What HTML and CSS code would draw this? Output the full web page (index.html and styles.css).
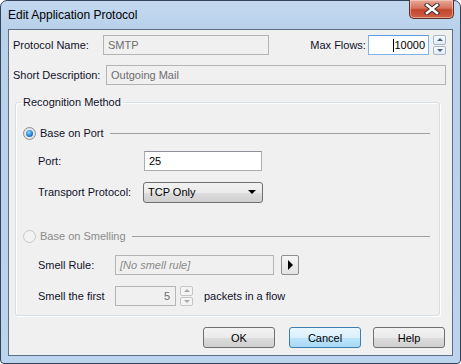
FILE: index.html
```html
<!DOCTYPE html>
<html lang="en">
<head>
    <meta charset="UTF-8">
    <title>Edit Application Protocol</title>
    <link rel="stylesheet" href="styles.css">
</head>
<body>

    <div class="window">
        <div class="titlebar">
            <span class="title">Edit Application Protocol</span>
            <div class="close">
                <svg width="16" height="12" viewBox="0 0 16 12">
                    <path d="M3 2 L13 10 M13 2 L3 10" stroke="#3b2a2a" stroke-width="4.4" stroke-linecap="square"/>
                    <path d="M3 2 L13 10 M13 2 L3 10" stroke="#ffffff" stroke-width="2.6" stroke-linecap="square"/>
                </svg>
            </div>
        </div>

        <div class="client">
            <div class="row top-row">
                <label class="lbl lbl-name">Protocol Name:</label>
                <div class="input disabled w-name">SMTP</div>
                <label class="lbl lbl-flows">Max Flows:</label>
                <div class="input focused w-flows"><span class="caret"></span>10000</div>
                <div class="spin">
                    <div class="spin-btn"><span class="arr up"></span></div>
                    <div class="spin-btn"><span class="arr down"></span></div>
                </div>
            </div>

            <div class="row desc-row">
                <label class="lbl lbl-desc">Short Description:</label>
                <div class="input disabled grow">Outgoing Mail</div>
            </div>

            <fieldset class="group">
                <legend>Recognition Method</legend>

                <div class="radio-row">
                    <span class="radio checked"></span>
                    <span class="radio-text">Base on Port</span>
                    <span class="rule"></span>
                </div>

                <div class="row sub-row first">
                    <label class="lbl lbl-sub">Port:</label>
                    <div class="input w-port">25</div>
                </div>

                <div class="row sub-row">
                    <label class="lbl lbl-sub">Transport Protocol:</label>
                    <div class="select">
                        <span>TCP Only</span>
                        <span class="sel-arrow"></span>
                    </div>
                </div>

                <div class="radio-row second">
                    <span class="radio off"></span>
                    <span class="radio-text off-text">Base on Smelling</span>
                    <span class="rule"></span>
                </div>

                <div class="row sub-row smell-first">
                    <label class="lbl lbl-smell">Smell Rule:</label>
                    <div class="input disabled w-rule"><em>[No smell rule]</em></div>
                    <div class="play"><span class="play-arr"></span></div>
                </div>

                <div class="row sub-row">
                    <label class="lbl lbl-smell">Smell the first</label>
                    <div class="input disabled w-first num">5</div>
                    <div class="spin off-spin">
                        <div class="spin-btn"><span class="arr up"></span></div>
                        <div class="spin-btn"><span class="arr down"></span></div>
                    </div>
                    <span class="after">packets in a flow</span>
                </div>
            </fieldset>

            <div class="buttons">
                <button class="btn">OK</button>
                <button class="btn default">Cancel</button>
                <button class="btn">Help</button>
            </div>
        </div>
    </div>

</body>
</html>
```

FILE: styles.css
```css
body {
    margin: 0px;
    font-family: "Liberation Sans", Arial, sans-serif;
    font-size: 11px;
    background: #ffffff;
}

.window {
    width: 461px;
    height: 364px;
    box-sizing: border-box;
    border: 1px solid #33435a;
    border-radius: 7px 7px 4px 4px;
    background: linear-gradient(to bottom, #c3d9f0 0px, #b8d0ea 30px, #bcd4ed 100%);
    padding: 0 7px 7px 7px;
    display: flex;
    flex-direction: column;
}

.titlebar {
    height: 28px;
    display: flex;
    justify-content: space-between;
    align-items: flex-start;
}

.title {
    font-size: 12px;
    color: #000000;
    margin-top: 7px;
}

.close {
    width: 45px;
    height: 19px;
    margin-top: -1px;
    margin-right: -1px;
    box-sizing: border-box;
    border: 1px solid #5c2e24;
    border-top: none;
    border-radius: 0 0 5px 5px;
    background: linear-gradient(to bottom, #e7a999 0%, #d6735d 45%, #c2452b 55%, #d0624a 100%);
    box-shadow: inset 0 0 0 1px rgba(255, 220, 210, 0.5);
    display: flex;
    align-items: center;
    justify-content: center;
}

.client {
    flex: 1;
    border: 1px solid #5d6f84;
    background: #f0f0f0;
    padding: 5px 6px 0 4px;
    display: flex;
    flex-direction: column;
}

.row {
    display: flex;
    align-items: center;
    height: 20px;
}

.desc-row {
    margin-top: 10px;
}

.lbl {
    color: #10102a;
    flex-shrink: 0;
}

.lbl-name { width: 90px; }
.lbl-desc { width: 93px; }
.lbl-flows { margin-left: 41px; width: 58px; }

.input {
    height: 20px;
    box-sizing: border-box;
    border: 1px solid #abadb3;
    border-top-color: #8e9199;
    background: #ffffff;
    padding: 0 4px;
    display: flex;
    align-items: center;
    color: #000000;
}

.input.disabled {
    background: #f0f0f0;
    border-color: #b4b4b4;
    color: #6d6d6d;
}

.input.focused {
    border-color: #7eb4ea;
    border-top-color: #569de5;
    justify-content: flex-end;
    padding-right: 3px;
}

.caret {
    width: 1px;
    height: 13px;
    background: #000000;
}

.w-name { width: 167px; }
.w-flows { width: 61px; }
.grow { flex: 1; }
.w-port { width: 118px; margin-left: 1px; }
.w-rule { width: 159px; }
.w-first { width: 61px; }
.num { justify-content: flex-end; padding-right: 5px; }

.spin {
    margin-left: 4px;
    width: 13px;
    height: 20px;
    display: flex;
    flex-direction: column;
    gap: 1px;
}

.spin-btn {
    flex: 1;
    box-sizing: border-box;
    border: 1px solid #a7b6c7;
    border-radius: 2px;
    background: linear-gradient(to bottom, #f8fbfe, #e2ebf4);
    display: flex;
    align-items: center;
    justify-content: center;
}

.off-spin .spin-btn {
    border-color: #c5c5c5;
    background: #f4f4f4;
}

.arr {
    width: 0;
    height: 0;
    border-left: 3px solid transparent;
    border-right: 3px solid transparent;
}

.arr.up { border-bottom: 3px solid #4a5f7a; }
.arr.down { border-top: 3px solid #4a5f7a; }
.off-spin .arr.up { border-bottom-color: #a8a8a8; }
.off-spin .arr.down { border-top-color: #a8a8a8; }

.group {
    margin: 11px 6px 0 2px;
    padding: 0 0 9px 0;
    border: 1px solid #d5dfe5;
    border-radius: 3px;
    box-shadow: inset 1px 1px 0 #ffffff, 1px 1px 0 #ffffff;
}

.group legend {
    margin-left: 5px;
    padding: 0 2px;
    color: #10102a;
}

.radio-row {
    display: flex;
    align-items: center;
    height: 16px;
    margin-top: 17px;
    padding-left: 7px;
    padding-right: 9px;
}

.radio-row.second {
    margin-top: 26px;
}

.radio {
    width: 13px;
    height: 13px;
    box-sizing: border-box;
    border-radius: 50%;
    border: 1px solid #8f8f8f;
    background: radial-gradient(circle, #f5f5f5 0%, #dcdcdc 100%);
    display: flex;
    align-items: center;
    justify-content: center;
}

.radio.checked::after {
    content: "";
    width: 7px;
    height: 7px;
    border-radius: 50%;
    background: radial-gradient(circle at 40% 35%, #8fd8fb 0%, #1f7ad1 60%, #19558f 100%);
}

.radio.off {
    border-color: #c8c8c8;
    background: #f2f2f2;
}

.radio-text {
    margin-left: 4px;
    color: #10102a;
}

.off-text {
    color: #8a8a8a;
}

.rule {
    flex: 1;
    margin-left: 6px;
    border-top: 1px solid #a0a0a0;
}

.sub-row {
    margin-top: 11px;
    padding-left: 22px;
}

.sub-row.first {
    margin-top: 10px;
}

.sub-row.smell-first {
    margin-top: 11px;
}

.lbl-sub { width: 105px; }
.lbl-smell { width: 77px; }

.select {
    width: 120px;
    height: 21px;
    box-sizing: border-box;
    border: 1px solid #707070;
    border-radius: 3px;
    background: linear-gradient(to bottom, #f2f2f2 0%, #ebebeb 50%, #dddddd 51%, #cfcfcf 100%);
    display: flex;
    align-items: center;
    justify-content: space-between;
    padding: 0 6px 0 4px;
    color: #000000;
}

.sel-arrow {
    width: 0;
    height: 0;
    border-left: 4px solid transparent;
    border-right: 4px solid transparent;
    border-top: 4px solid #000000;
}

.w-rule em {
    color: #8a8a8a;
}

.play {
    width: 18px;
    height: 20px;
    margin-left: 7px;
    box-sizing: border-box;
    border: 1px solid #8e8e8e;
    border-radius: 2px;
    background: linear-gradient(to bottom, #f6f6f6, #e2e2e2);
    display: flex;
    align-items: center;
    justify-content: center;
}

.play-arr {
    width: 0;
    height: 0;
    border-top: 5px solid transparent;
    border-bottom: 5px solid transparent;
    border-left: 5px solid #000000;
    margin-left: 1px;
}

.after {
    margin-left: 11px;
    color: #10102a;
}

.buttons {
    display: flex;
    justify-content: flex-end;
    margin-top: 11px;
    padding-right: 1px;
}

.btn {
    width: 72px;
    height: 21px;
    margin-left: 14px;
    font-family: "Liberation Sans", Arial, sans-serif;
    font-size: 11px;
    color: #000000;
    border: 1px solid #707070;
    border-radius: 3px;
    background: linear-gradient(to bottom, #f2f2f2 0%, #ebebeb 50%, #dddddd 51%, #cfcfcf 100%);
    padding: 0;
}

.btn.default {
    border-color: #3c7fb1;
    background: linear-gradient(to bottom, #eaf6fd 0%, #d9f0fc 50%, #bee6fd 51%, #a7d9f5 100%);
    margin-right: -2px;
}
```
